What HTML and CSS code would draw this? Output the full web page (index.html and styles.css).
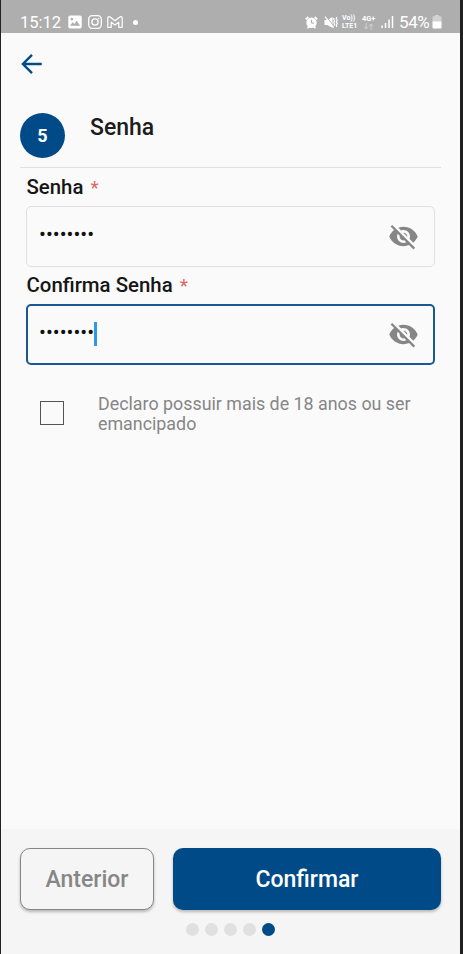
FILE: index.html
```html
<!DOCTYPE html>
<html lang="pt-BR">
<head>
<meta charset="utf-8">
<title>Senha</title>
<link rel="stylesheet" href="styles.css">
</head>
<body>
<div class="screen">
  <header class="status">
    <span class="clock">15:12</span>
    <svg class="s-photo" width="14" height="14" viewBox="0 0 14 14"><path fill="#fff" fill-rule="evenodd" d="M2 .5h10q1.7 0 1.7 1.7v9.6q0 1.7-1.7 1.7H2Q.3 13.500.3 11.800V2.200Q.3.500 2 .500ZM2 10.800h10.200L8.700 5.800 6.400 9 4.500 7.200ZM3.900 2.800a1.300 1.300 0 1 0 .01 0Z"/></svg>
    <svg class="s-insta" width="14" height="14" viewBox="0 0 14 14" fill="none" stroke="#fff" stroke-width="1.300"><rect x=".7" y=".7" width="12.600" height="12.600" rx="3.500"/><circle cx="7" cy="7" r="3.100"/><circle cx="10.700" cy="3.400" r=".5" fill="#fff" stroke-width=".5"/></svg>
    <svg class="s-mail" width="16" height="12" viewBox="0 0 16 12" fill="none" stroke="#fff" stroke-width="1.200" stroke-linejoin="round"><path d="M.8 11.300V2Q.8.700 2 .700 2.800.700 3.500 1.300L8 4.800l4.500-3.500Q13.200.700 14 .700q1.200 0 1.200 1.300v9.300h-3.400V6.200L8 9.100 4.200 6.200v5.100Z"/></svg>
    <span class="s-dot"></span>
    <svg class="s-alarm" width="13" height="13" viewBox="0 0 13 13"><path d="M.7 3.300 3.300 1M12.300 3.300 9.700 1M2.500 12.300l1.300-1.500M10.500 12.300 9.200 10.800" stroke="#fff" stroke-width="1.700"/><circle cx="6.500" cy="6.800" r="5.200" fill="#fff"/><path d="M6.500 3.800v3.300h2.700" fill="none" stroke="#aeaeae" stroke-width="1"/></svg>
    <svg class="s-mute" width="14" height="13" viewBox="0 0 14 13"><path fill="#fff" d="M.5 4h2.800L8.500 1v11L3.300 9H.5Z"/><path d="M2 .400 10.200 10.600" stroke="#aeaeae" stroke-width="1"/><path d="M1 .600 9.800 11.600" stroke="#fff" stroke-width="1.200"/><path d="m10.200 2-.5 1.500.9 1.500-.9 1.600.9 1.600-.5 1.500M12.800 1l-.5 1.600.9 1.600-.9 1.700.9 1.700-.9 1.700.5 1.700" fill="none" stroke="#fff" stroke-width="1.200"/></svg>
    <span class="volte"><span>Vo))</span><span>LTE1</span></span>
    <span class="net">4G+<svg width="11" height="7" viewBox="0 0 11 7" fill="none" stroke="#d0d0d0" stroke-width="1"><path d="M3.200 0v6M1 3.800 3.200 6l2.200-2.200M8 7V1M5.800 3.200 8 1l2.200 2.200"/></svg></span>
    <svg class="s-signal" width="13" height="12" viewBox="0 0 13 12" stroke="#fff" stroke-width="1.500"><path d="M1 12V9.500M4.500 12V7M8 12V3.500M11.500 12V0"/></svg>
    <span class="percent">54%</span>
    <svg class="s-battery" width="10" height="14" viewBox="0 0 10 14"><path fill="#d2d2d2" d="M3 0h4v1.200h1.200Q9.500 1.200 9.500 2.500V7h-9V2.500Q.5 1.200 1.800 1.200H3Z"/><path fill="#fff" d="M.5 6.500h9v5.700q0 1.300-1.300 1.300H1.800Q.5 13.500.5 12.200Z"/></svg>
  </header>
  <main class="content">
    <svg class="back" width="22" height="20" viewBox="0 0 22 20" fill="none" stroke="#004b87" stroke-width="2.400"><path d="M20.700 10H2.200M11 .900 1.900 10 11 19.100"/></svg>
    <section class="step">
      <span class="badge">5</span>
      <h1>Senha</h1>
    </section>
    <form class="form">
      <div class="label">Senha<span class="req">*</span></div>
      <div class="field">
        <span class="dots">••••••••</span>
        <svg class="eye" viewBox="0 0 24 24"><path fill="#868686" d="M12 7c2.760 0 5 2.240 5 5 0 .65-.13 1.260-.36 1.830l2.920 2.920c1.510-1.260 2.700-2.890 3.430-4.750-1.730-4.390-6-7.500-11-7.500-1.400 0-2.740.25-3.980.7l2.160 2.160C10.740 7.130 11.350 7 12 7zM2 4.270l2.280 2.280.46.46C3.080 8.300 1.780 10.020 1 12c1.730 4.390 6 7.500 11 7.500 1.550 0 3.030-.3 4.380-.84l.42.42L19.730 22 21 20.730 3.270 3 2 4.270zM7.530 9.800l1.550 1.550c-.05.21-.08.43-.08.65 0 1.660 1.340 3 3 3 .22 0 .44-.03.65-.08l1.550 1.550c-.67.33-1.410.53-2.200.53-2.760 0-5-2.240-5-5 0-.79.2-1.530.53-2.200zm4.310-.78 3.150 3.150.02-.16c0-1.660-1.340-3-3-3l-.17.01z"/></svg>
      </div>
      <div class="label">Confirma Senha<span class="req">*</span></div>
      <div class="field focused">
        <span class="dots">••••••••</span><span class="caret"></span>
        <svg class="eye" viewBox="0 0 24 24"><path fill="#868686" d="M12 7c2.760 0 5 2.240 5 5 0 .65-.13 1.260-.36 1.830l2.920 2.920c1.510-1.260 2.700-2.890 3.430-4.750-1.730-4.390-6-7.500-11-7.500-1.400 0-2.740.25-3.980.7l2.160 2.160C10.740 7.130 11.350 7 12 7zM2 4.270l2.280 2.280.46.46C3.080 8.300 1.780 10.020 1 12c1.730 4.390 6 7.500 11 7.500 1.550 0 3.030-.3 4.380-.84l.42.42L19.730 22 21 20.730 3.270 3 2 4.270zM7.530 9.800l1.550 1.550c-.05.21-.08.43-.08.65 0 1.660 1.340 3 3 3 .22 0 .44-.03.65-.08l1.550 1.550c-.67.33-1.410.53-2.200.53-2.760 0-5-2.240-5-5 0-.79.2-1.530.53-2.200zm4.310-.78 3.150 3.150.02-.16c0-1.660-1.340-3-3-3l-.17.01z"/></svg>
      </div>
      <div class="consent">
        <span class="box"></span>
        <span class="terms">Declaro possuir mais de 18 anos ou ser<br>emancipado</span>
      </div>
    </form>
  </main>
  <footer class="footer">
    <div class="buttons">
      <button class="btn prev">Anterior</button>
      <button class="btn next">Confirmar</button>
    </div>
    <div class="pager"><i></i><i></i><i></i><i></i><i class="on"></i></div>
  </footer>
</div>
</body>
</html>
```
FILE: styles.css
```css
* { box-sizing: border-box; }
body { margin: 0; font-family: Roboto, sans-serif; background: #fafafa; }
svg { display: block; flex: none; }
.screen {
  height: 954px;
  display: flex;
  flex-direction: column;
  border-left: 1px solid #222;
  border-right: 3px solid #202020;
  background: #fafafa;
}
.status {
  height: 33px;
  flex: none;
  display: flex;
  align-items: center;
  padding: 11px 0 0 19px;
  background: #aeaeae;
  color: #fff;
  white-space: nowrap;
}
.clock { width: 48px; padding-top: 1px; font-size: 16.5px; line-height: 20px; }
.s-insta { margin-left: 6px; }
.s-mail { margin-left: 5px; }
.s-dot { width: 5px; height: 5px; margin-left: 10px; border-radius: 50%; background: #fff; }
.s-alarm { margin-left: 167px; }
.s-mute { margin-left: 6px; }
.volte { display: flex; flex-direction: column; width: 17px; margin-left: 4px; font-size: 7px; line-height: 8px; font-weight: 700; }
.net { width: 14px; margin-left: 3px; font-size: 7.4px; line-height: 8px; font-weight: 700; }
.net svg { margin-left: 1px; }
.s-signal { margin-left: 5px; }
.percent { width: 32px; margin-left: 5px; font-size: 17px; line-height: 20px; letter-spacing: -0.4px; }
.s-battery { margin-left: 1px; }
.content { flex: 1; padding: 21px 19px 0; }
.back { margin-left: 1px; }
.step {
  height: 94px;
  display: flex;
  padding-top: 39px;
  border-bottom: 1px solid #e0e0e0;
}
.badge {
  width: 45px;
  height: 45px;
  border-radius: 50%;
  background: #004b87;
  color: #fff;
  font-size: 18px;
  font-weight: 700;
  line-height: 46px;
  text-align: center;
}
h1 { margin: 2px 0 0 25px; font-size: 23px; line-height: 26px; font-weight: 500; color: #1c1c1c; }
.form { padding: 0 6px 0 6px; }
.label { height: 38px; padding: 7px 0 0 0.5px; font-size: 20.4px; line-height: 24px; font-weight: 500; color: #161616; white-space: nowrap; }
.req { margin-left: 7px; font-size: 19px; color: #e0665c; font-weight: 400; }
.field {
  height: 61px;
  margin-bottom: -1px;
  display: flex;
  align-items: center;
  padding: 0 15px 0 12px;
  border: 1px solid #e0e0e0;
  border-radius: 5px;
}
.field.focused { border: 2px solid #1b5790; padding: 0 14px 0 11px; }
.dots { margin-top: -5px; font-size: 20.4px; line-height: 24px; color: #111; }
.caret { width: 3px; height: 24px; margin-top: -2px; background: #2f96e8; }
.eye { width: 31px; height: 31px; margin-left: auto; }
.consent { display: flex; padding: 29px 0 0 14px; }
.box { width: 24px; height: 24px; flex: none; margin-top: 8px; border: 1.5px solid #555; }
.terms { margin: 1px 0 0 34px; font-size: 17.85px; line-height: 20px; color: #868686; white-space: nowrap; }
.footer { height: 125px; flex: none; padding: 19px 19px 0; background: #f5f5f5; }
.buttons { display: flex; gap: 19px; }
.btn {
  height: 62px;
  padding: 2px 0 0;
  border: 0;
  border-radius: 10px;
  font: 500 23px/60px Roboto, sans-serif;
  box-shadow: 0 2px 3px rgba(0, 0, 0, .25);
}
.prev { width: 134px; border: 1px solid #868686; background: #f5f5f5; color: #868686; line-height: 58px; }
.next { flex: 1; background: #004b87; color: #fff; }
.pager { display: flex; justify-content: center; gap: 6px; margin-top: 13px; }
.pager i { width: 13px; height: 13px; border-radius: 50%; background: #e0e0e0; }
.pager .on { background: #004b87; }
```
